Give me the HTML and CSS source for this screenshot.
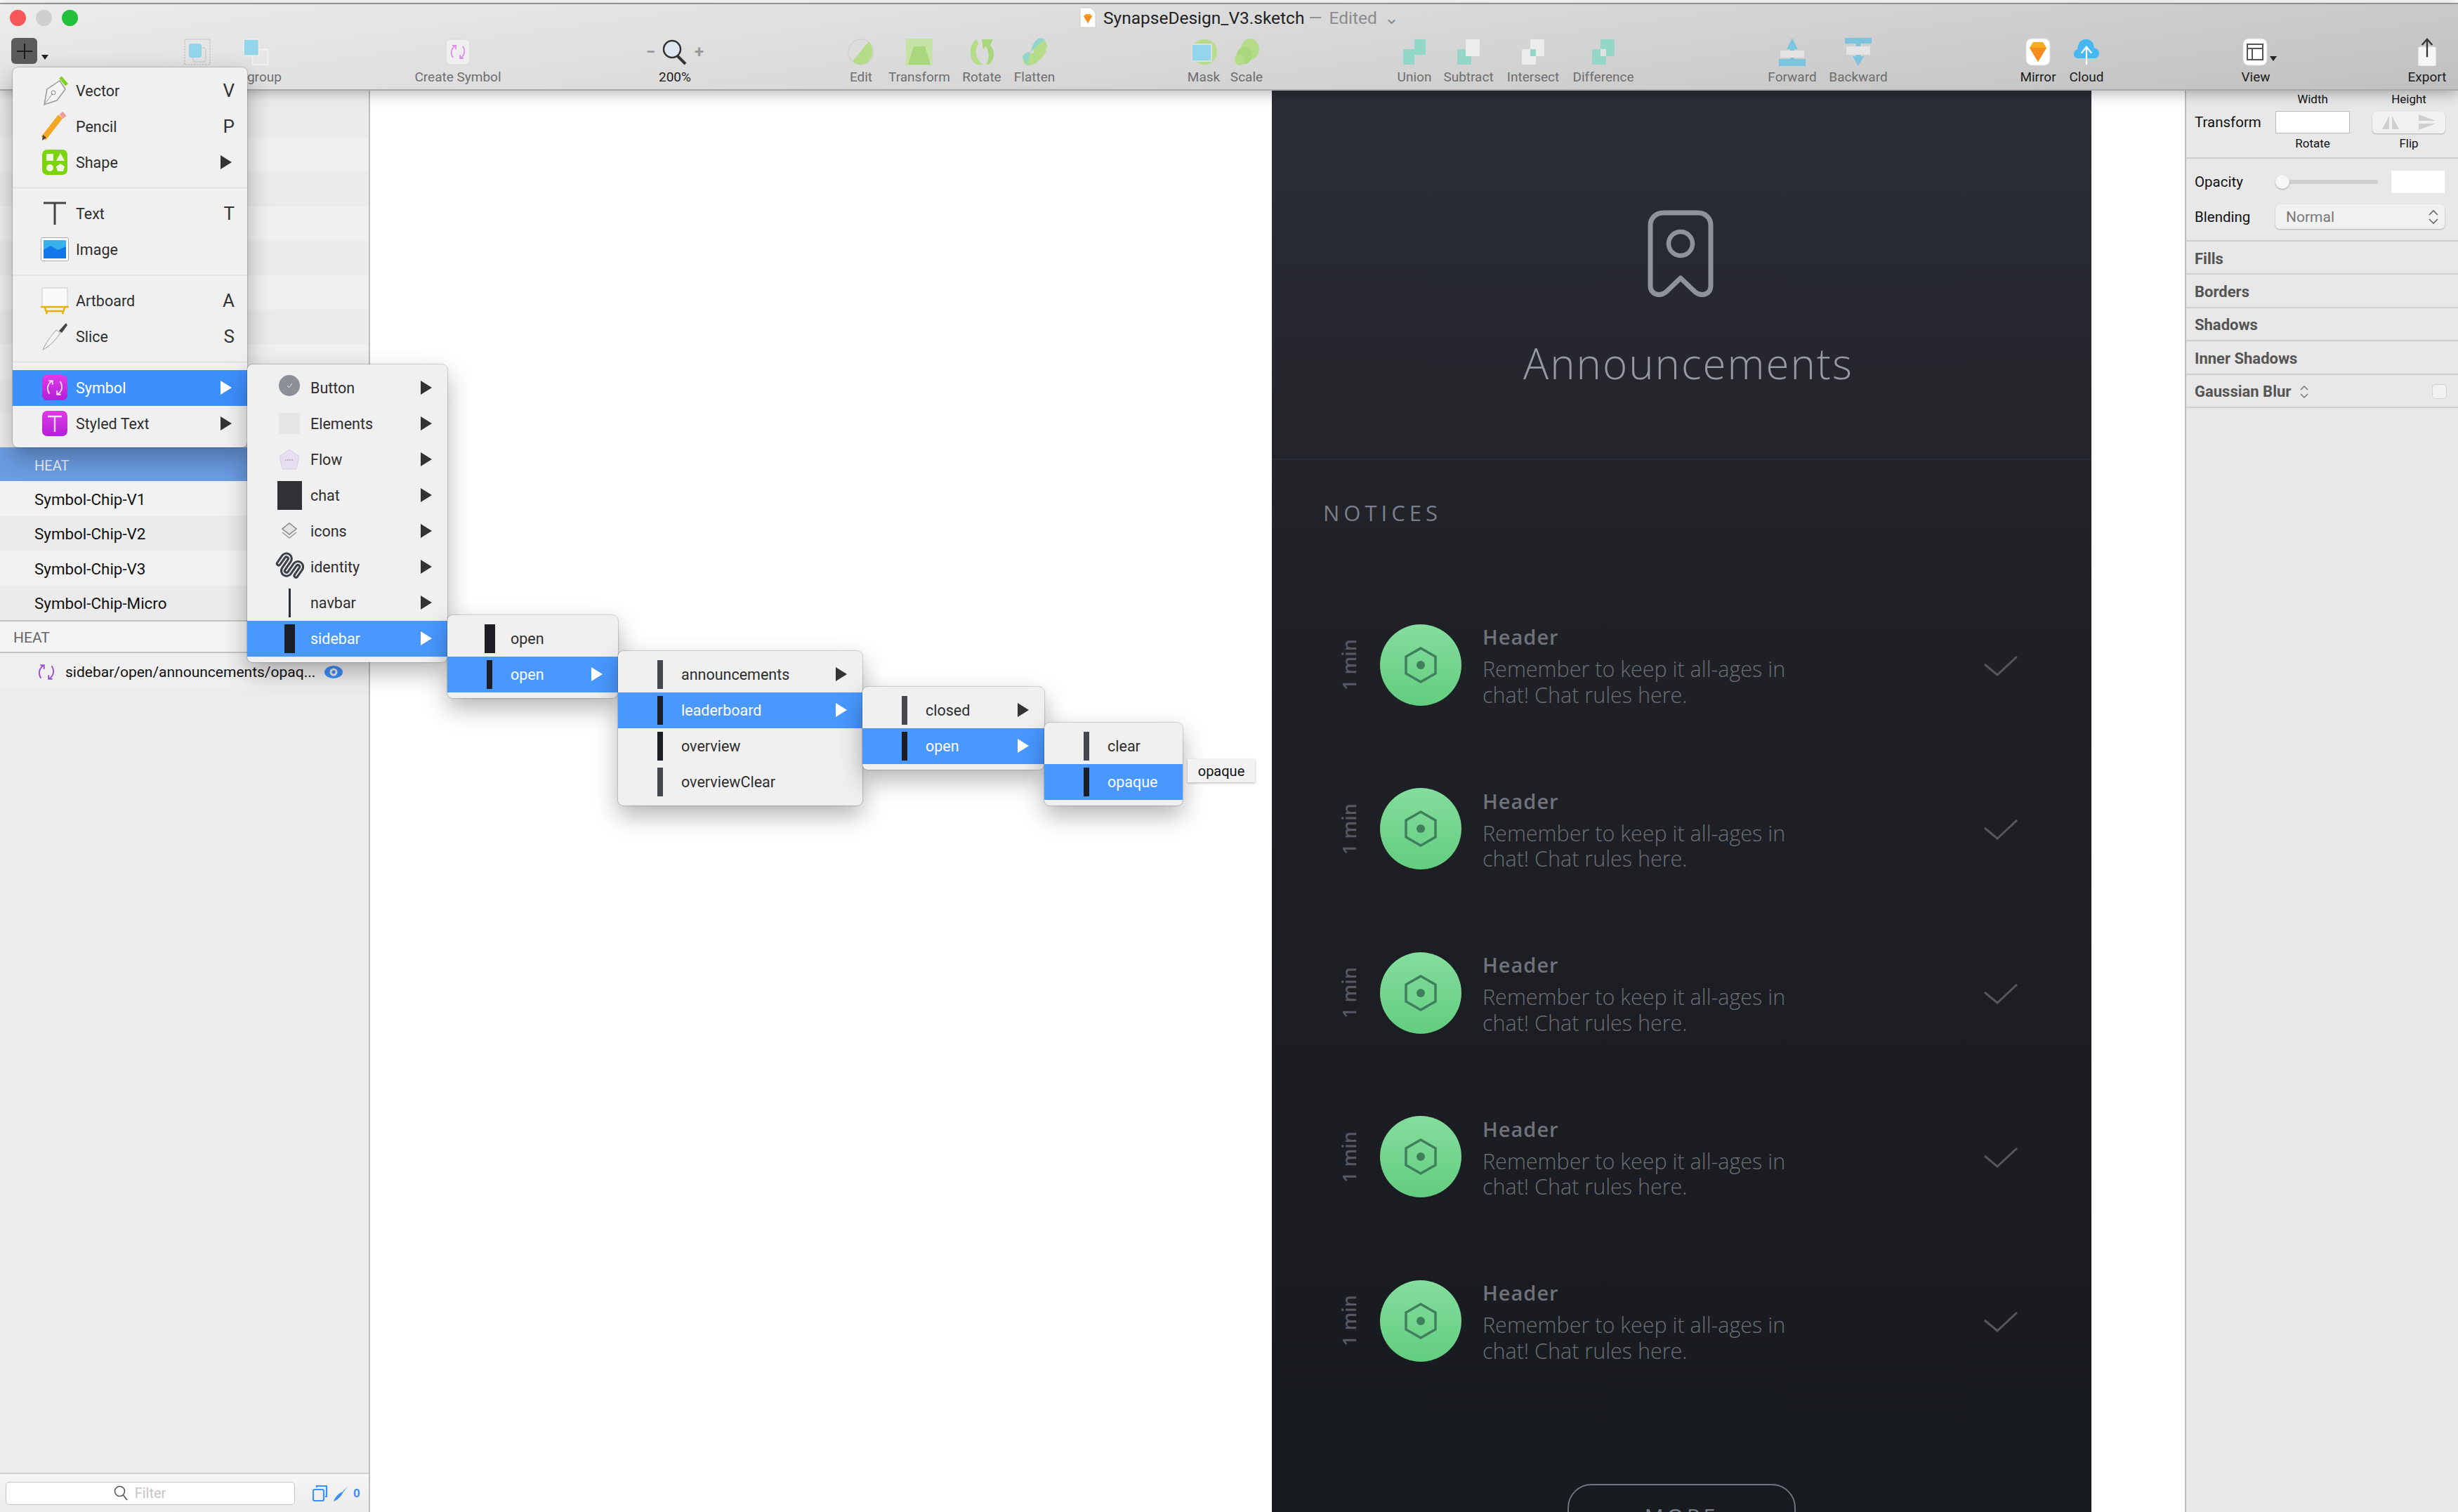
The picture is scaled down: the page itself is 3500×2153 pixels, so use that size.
FILE: index.html
```html
<!DOCTYPE html>
<html lang="en">
<head>
    <meta charset="UTF-8">
    <title>SynapseDesign_V3.sketch</title>
    <link rel="stylesheet" href="styles.css">
</head>
<body>
<svg class="defs" width="0" height="0">
    <symbol id="hex" viewBox="0 0 46 52">
        <path d="M23 2 L44 14 V38 L23 50 L2 38 V14 Z" fill="none" stroke="#3f7f5c" stroke-width="3.5"/>
        <circle cx="23" cy="26" r="6" fill="#3f7f5c"/>
    </symbol>
    <symbol id="tick" viewBox="0 0 48 29">
        <path d="M1 12 L19 27 L47 1" fill="none" stroke="#54575d" stroke-width="3"/>
    </symbol>
    <symbol id="sym-arrows" viewBox="0 0 24 24">
        <path d="M5 20 C1 14 2 7 9 3 M4 3 H9 V8 M19 4 C23 10 22 17 15 21 M20 21 H15 V16" fill="none" stroke="currentColor" stroke-width="1.8"/>
    </symbol>
</svg>

<div class="app">
    <div class="topline"></div>

    <header class="toolbar">
        <div class="titlebar">
            <span class="light light-red"></span>
            <span class="light light-grey"></span>
            <span class="light light-green"></span>
            <svg class="doc-icon" width="24" height="30" viewBox="0 0 24 30">
                <path d="M1 1 H16 L23 8 V29 H1 Z" fill="#fff" stroke="#ccc"/>
                <path d="M6 13 L9 10 H15 L18 13 L12 23 Z" fill="#f6a623"/>
                <path d="M6 13 H18 L12 23 Z" fill="#f78c1e"/>
            </svg>
            <span class="doc-name">SynapseDesign_V3.sketch</span>
            <span class="doc-state">— Edited ⌄</span>
        </div>
        <div class="tools">
            <div class="tool t-insert">
                <div class="insert-btn"><span class="insert-plus"></span></div>
                <span class="caret"></span>
            </div>
            <div class="group g-1">
                <div class="tool t-80">
                    <svg width="40" height="40" viewBox="0 0 40 40"><rect x="2" y="2" width="36" height="36" fill="none" stroke="#bdbdbd" stroke-dasharray="3 1"/><rect x="14" y="14" width="18" height="20" rx="3" fill="#e4e4e4" stroke="#c4c4c4"/><rect x="8" y="8" width="18" height="20" rx="3" fill="#93d5ea"/></svg>
                </div>
                <div class="tool t-88">
                    <svg width="44" height="44" viewBox="0 0 44 44"><rect x="16" y="18" width="24" height="24" fill="#e6e6e6" stroke="#f2f2f2" stroke-width="2"/><rect x="2" y="2" width="24" height="26" rx="2" fill="#93d5ea" stroke="#eee" stroke-width="2"/></svg>
                    <span class="tool-label">Ungroup</span>
                </div>
            </div>
            <div class="group g-2">
                <div class="tool t-140">
                    <svg width="36" height="38" viewBox="0 0 36 38"><rect x="1" y="1" width="34" height="36" rx="6" fill="#f0eef0" stroke="#d6d6d6"/><use href="#sym-arrows" x="6" y="7" width="24" height="24" color="#dc8ee6"/></svg>
                    <span class="tool-label">Create Symbol</span>
                </div>
            </div>
            <div class="group g-3">
                <div class="tool t-100">
                    <div class="zoom-ctl">
                        <span class="zoom-sign">−</span>
                        <svg width="38" height="38" viewBox="0 0 38 38"><circle cx="15" cy="15" r="12" fill="#dfe8f2" stroke="#333" stroke-width="2.5"/><path d="M23 25 L34 36" stroke="#333" stroke-width="4"/></svg>
                        <span class="zoom-sign">+</span>
                    </div>
                    <span class="tool-label on">200%</span>
                </div>
            </div>
            <div class="group g-4">
                <div class="tool t-74">
                    <svg width="40" height="40" viewBox="0 0 40 40"><circle cx="20" cy="20" r="18" fill="#ddd" stroke="#ccc"/><path d="M8 33 L31 5 C42 18 36 38 18 38 C14 38 10 36 8 33 Z" fill="#b5dc88"/></svg>
                    <span class="tool-label">Edit</span>
                </div>
                <div class="tool t-92">
                    <svg width="40" height="40" viewBox="0 0 40 40"><rect x="1" y="1" width="38" height="38" fill="#c6e3a5"/><path d="M12 12 H28 L36 38 H4 Z" fill="#aad67d"/></svg>
                    <span class="tool-label">Transform</span>
                </div>
                <div class="tool t-86">
                    <svg width="44" height="40" viewBox="0 0 44 40"><path d="M14 2 C2 12 4 30 14 38 H24 C14 32 10 16 18 8 Z" fill="#b5dc88"/><path d="M22 2 L38 2 L34 10 C42 20 40 32 32 38 H28 C34 28 32 18 28 12 L24 16 Z" fill="#aad67d"/></svg>
                    <span class="tool-label">Rotate</span>
                </div>
                <div class="tool t-64">
                    <svg width="40" height="40" viewBox="0 0 40 40"><path d="M20 22 C4 18 -2 36 10 39 C20 40 36 28 38 12 C38 2 28 -2 22 4 C16 10 18 16 20 22 Z" fill="#b5dc88"/><path d="M14 20 L35 2 C30 -1 25 0 22 4 C18 8 16 14 14 20 Z M10 39 L3 28 C4 22 10 20 14 20 Z" fill="#93d5cc"/></svg>
                    <span class="tool-label">Flatten</span>
                </div>
            </div>
            <div class="group g-5">
                <div class="tool t-60">
                    <svg width="40" height="40" viewBox="0 0 40 40"><circle cx="21" cy="20" r="18" fill="#b5dc88"/><rect x="3" y="9" width="28" height="24" fill="#93d5ea" stroke="#ddd" stroke-width="2"/></svg>
                    <span class="tool-label">Mask</span>
                </div>
                <div class="tool t-62">
                    <svg width="40" height="40" viewBox="0 0 40 40"><ellipse cx="25" cy="16" rx="13" ry="15" fill="#b5dc88"/><ellipse cx="17" cy="25" rx="11" ry="12" fill="#aad67d"/><ellipse cx="10" cy="31" rx="7" ry="8" fill="#b5dc88"/></svg>
                    <span class="tool-label">Scale</span>
                </div>
            </div>
            <div class="group g-6">
                <div class="tool t-70">
                    <svg width="40" height="40" viewBox="0 0 40 40"><path d="M20 2 H36 V24 H20 V38 H4 V16 H20 Z" fill="#93d8c6"/></svg>
                    <span class="tool-label">Union</span>
                </div>
                <div class="tool t-84">
                    <svg width="40" height="40" viewBox="0 0 40 40"><rect x="16" y="2" width="20" height="24" rx="2" fill="#ececec"/><path d="M4 16 H16 V26 H24 V38 H4 Z" fill="#93d8c6"/></svg>
                    <span class="tool-label">Subtract</span>
                </div>
                <div class="tool t-100">
                    <svg width="40" height="40" viewBox="0 0 40 40"><rect x="16" y="2" width="20" height="24" rx="2" fill="#ececec"/><rect x="4" y="16" width="20" height="22" rx="2" fill="#ececec"/><rect x="16" y="16" width="8" height="10" fill="#93d8c6"/></svg>
                    <span class="tool-label">Intersect</span>
                </div>
                <div class="tool t-100">
                    <svg width="40" height="40" viewBox="0 0 40 40"><rect x="16" y="2" width="20" height="24" rx="2" fill="#93d8c6"/><rect x="4" y="16" width="20" height="22" rx="2" fill="#93d8c6"/><rect x="16" y="16" width="8" height="10" fill="#e2e2e2"/></svg>
                    <span class="tool-label">Difference</span>
                </div>
            </div>
            <div class="group g-7">
                <div class="tool t-100">
                    <svg width="38" height="40" viewBox="0 0 38 40"><path d="M19 0 L27 16 H22 V30 H38 V40 H0 V30 H16 V16 H11 Z" fill="#7cc4de"/><rect x="2" y="18" width="34" height="10" fill="#e4e4e4"/></svg>
                    <span class="tool-label">Forward</span>
                </div>
                <div class="tool t-88">
                    <svg width="38" height="40" viewBox="0 0 38 40"><path d="M0 0 H38 V8 H22 V26 H27 L19 40 L11 26 H16 V8 H0 Z" fill="#7cc4de"/><rect x="2" y="12" width="34" height="12" fill="#e4e4e4"/></svg>
                    <span class="tool-label">Backward</span>
                </div>
            </div>
            <div class="group g-8">
                <div class="tool t-70">
                    <svg width="36" height="40" viewBox="0 0 36 40"><rect x="1" y="1" width="34" height="38" rx="8" fill="#fff" stroke="#ddd"/><path d="M6 14 L11 6 H25 L30 14 L18 34 Z" fill="#f8ae1c"/><path d="M6 14 H30 L18 34 Z" fill="#f68b1f"/></svg>
                    <span class="tool-label on">Mirror</span>
                </div>
                <div class="tool t-68">
                    <svg width="44" height="44" viewBox="0 0 44 44"><path d="M9 32 C0 32 0 20 8 18 C8 8 14 2 22 2 C30 2 34 10 34 16 C44 16 44 32 35 32 Z" fill="#45b8f2"/><path d="M22 42 V16 M14 24 L22 14 L30 24" fill="none" stroke="#fff" stroke-width="2.5"/></svg>
                    <span class="tool-label on">Cloud</span>
                </div>
            </div>
            <div class="group g-9">
                <div class="tool t-80">
                    <div class="view-icon">
                        <svg width="36" height="40" viewBox="0 0 36 40"><rect x="1" y="1" width="34" height="38" rx="8" fill="#fff" stroke="#ddd"/><rect x="7" y="9" width="22" height="22" fill="none" stroke="#555" stroke-width="2"/><path d="M7 15 H29 M14 15 V31" stroke="#555" stroke-width="2"/></svg>
                        <span class="caret caret-view"></span>
                    </div>
                    <span class="tool-label on">View</span>
                </div>
            </div>
            <div class="group g-10">
                <div class="tool t-88">
                    <svg width="32" height="44" viewBox="0 0 32 44"><rect x="2" y="14" width="28" height="30" rx="3" fill="#f6f6f6" stroke="#ddd"/><path d="M16 30 V3 M8 11 L16 2 L24 11" fill="none" stroke="#333" stroke-width="2.5"/></svg>
                    <span class="tool-label on">Export</span>
                </div>
            </div>
        </div>
    </header>

    <main class="workspace">
        <aside class="sidebar">
            <div class="page-rows"></div>
            <div class="side-band">HEAT</div>
            <div class="side-row">Symbol-Chip-V1</div>
            <div class="side-row even">Symbol-Chip-V2</div>
            <div class="side-row">Symbol-Chip-V3</div>
            <div class="side-row even">Symbol-Chip-Micro</div>
            <div class="side-head">HEAT</div>
            <div class="layer-row">
                <svg class="layer-sym" width="26" height="28"><use href="#sym-arrows" width="26" height="28" color="#9a4fd0"/></svg>
                <span class="layer-name">sidebar/open/announcements/opaq...</span>
                <svg class="layer-eye" width="28" height="20" viewBox="0 0 28 20"><ellipse cx="14" cy="10" rx="13" ry="9" fill="#3d8ffb"/><circle cx="14" cy="10" r="5.5" fill="#ececec"/><circle cx="14" cy="10" r="2.5" fill="#3d8ffb"/></svg>
            </div>
            <div class="side-fill"></div>
            <div class="side-foot">
                <div class="filter">
                    <svg width="20" height="22" viewBox="0 0 20 22"><circle cx="8.5" cy="8.5" r="7" fill="none" stroke="#555" stroke-width="1.6"/><path d="M13.5 14 L19 21" stroke="#555" stroke-width="1.6"/></svg>
                    <span>Filter</span>
                </div>
                <svg width="22" height="24" viewBox="0 0 22 24"><rect x="1" y="7" width="15" height="16" rx="2" fill="none" stroke="#3d8ffb" stroke-width="2.2"/><path d="M6 4 V2 H20 V17 H18" fill="none" stroke="#3d8ffb" stroke-width="2.2"/></svg>
                <svg class="foot-knife" width="22" height="24" viewBox="0 0 22 24"><path d="M21 1 L13 12 C10 18 5 22 0 24 C2 18 6 13 13 10 Z" fill="#3d8ffb"/></svg>
                <span class="foot-count">0</span>
            </div>
        </aside>

        <section class="canvas">
            <div class="artboard">
                <div class="hero">
                    <svg width="96" height="124" viewBox="0 0 96 124">
                        <path d="M48 97 L27 117 C18 124 5 120 5 108 V22 C5 12 12 4 24 4 H72 C84 4 91 12 91 22 V108 C91 120 78 124 69 117 Z" fill="none" stroke="#8e9299" stroke-width="7" stroke-linejoin="round"/>
                        <circle cx="48" cy="48" r="17" fill="none" stroke="#8e9299" stroke-width="6.5"/>
                    </svg>
                    <h1 class="hero-title">Announcements</h1>
                </div>
                <h2 class="notices-title">NOTICES</h2>
                <ul class="notices">
                    <li class="notice">
                        <span class="notice-time">1 min</span>
                        <span class="notice-badge"><svg width="46" height="52"><use href="#hex"/></svg></span>
                        <div class="notice-text">
                            <h3>Header</h3>
                            <p>Remember to keep it all-ages in<br>chat! Chat rules here.</p>
                        </div>
                        <svg class="notice-check" width="48" height="29"><use href="#tick"/></svg>
                    </li>
                    <li class="notice">
                        <span class="notice-time">1 min</span>
                        <span class="notice-badge"><svg width="46" height="52"><use href="#hex"/></svg></span>
                        <div class="notice-text">
                            <h3>Header</h3>
                            <p>Remember to keep it all-ages in<br>chat! Chat rules here.</p>
                        </div>
                        <svg class="notice-check" width="48" height="29"><use href="#tick"/></svg>
                    </li>
                    <li class="notice">
                        <span class="notice-time">1 min</span>
                        <span class="notice-badge"><svg width="46" height="52"><use href="#hex"/></svg></span>
                        <div class="notice-text">
                            <h3>Header</h3>
                            <p>Remember to keep it all-ages in<br>chat! Chat rules here.</p>
                        </div>
                        <svg class="notice-check" width="48" height="29"><use href="#tick"/></svg>
                    </li>
                    <li class="notice">
                        <span class="notice-time">1 min</span>
                        <span class="notice-badge"><svg width="46" height="52"><use href="#hex"/></svg></span>
                        <div class="notice-text">
                            <h3>Header</h3>
                            <p>Remember to keep it all-ages in<br>chat! Chat rules here.</p>
                        </div>
                        <svg class="notice-check" width="48" height="29"><use href="#tick"/></svg>
                    </li>
                    <li class="notice">
                        <span class="notice-time">1 min</span>
                        <span class="notice-badge"><svg width="46" height="52"><use href="#hex"/></svg></span>
                        <div class="notice-text">
                            <h3>Header</h3>
                            <p>Remember to keep it all-ages in<br>chat! Chat rules here.</p>
                        </div>
                        <svg class="notice-check" width="48" height="29"><use href="#tick"/></svg>
                    </li>
                </ul>
                <div class="more-btn">MORE</div>
            </div>
        </section>

        <aside class="inspector">
            <div class="ins-transform">
                <span></span><span class="ins-cap">Width</span><span class="ins-cap ins-cap-right">Height</span>
                <span class="ins-label">Transform</span>
                <span class="ins-input"></span>
                <div class="flip">
                    <svg width="52" height="30" viewBox="0 0 52 30"><path d="M24 6 V25 H14 Z M28 6 V25 H38 Z" fill="#cfcfcf"/></svg>
                    <svg width="52" height="30" viewBox="0 0 52 30"><path d="M14 4 L38 13 H14 Z M14 26 L38 17 H14 Z" fill="#cfcfcf"/></svg>
                </div>
                <span></span><span class="ins-cap">Rotate</span><span class="ins-cap ins-cap-right">Flip</span>
            </div>
            <div class="ins-style">
                <div class="ins-line">
                    <span class="ins-label">Opacity</span>
                    <div class="slider"><span class="slider-knob"></span></div>
                    <span class="ins-input ins-input-small"></span>
                </div>
                <div class="ins-line">
                    <span class="ins-label">Blending</span>
                    <div class="select">
                        <span>Normal</span>
                        <svg width="16" height="24" viewBox="0 0 16 24"><path d="M2 9 L8 3 L14 9 M2 15 L8 21 L14 15" fill="none" stroke="#666" stroke-width="1.6"/></svg>
                    </div>
                </div>
            </div>
            <div class="ins-row">Fills</div>
            <div class="ins-row">Borders</div>
            <div class="ins-row">Shadows</div>
            <div class="ins-row">Inner Shadows</div>
            <div class="ins-row">
                Gaussian Blur
                <svg class="blur-step" width="14" height="20" viewBox="0 0 14 20"><path d="M2 7 L7 2 L12 7 M2 13 L7 18 L12 13" fill="none" stroke="#777" stroke-width="1.5"/></svg>
                <span class="check-box"></span>
            </div>
        </aside>
    </main>

    <!-- insert menu -->
    <nav class="menu menu-main">
        <div class="menu-row"><span class="menu-icon">
            <svg width="38" height="44" viewBox="0 0 38 44"><path d="M4 42 L8 20 L26 8 L34 20 L22 36 Z" fill="#f4f4f4" stroke="#999" stroke-width="1.5"/><path d="M4 42 L16 26" stroke="#999"/><circle cx="17" cy="25" r="3" fill="none" stroke="#888"/><path d="M27 3 L36 14" stroke="#7ed321" stroke-width="5"/></svg>
            </span><span class="menu-text">Vector</span><span class="menu-key">V</span></div>
        <div class="menu-row"><span class="menu-icon">
            <svg width="38" height="42" viewBox="0 0 38 42"><path d="M3 38 L27 7" stroke="#f5a623" stroke-width="8"/><path d="M28 7 L33 3" stroke="#f19a9a" stroke-width="8"/><path d="M1 41 L2 33 L7 37 Z" fill="#444"/></svg>
            </span><span class="menu-text">Pencil</span><span class="menu-key">P</span></div>
        <div class="menu-row"><span class="menu-icon">
            <svg width="36" height="36" viewBox="0 0 36 36"><rect width="36" height="36" rx="7" fill="#7ed30f"/><rect x="6" y="6" width="10" height="10" fill="#eef8df"/><path d="M26 5 L32 16 H20 Z" fill="#eef8df"/><circle cx="11" cy="26" r="5" fill="#eef8df"/><path d="M26 20 L32 24 L30 31 H22 L20 24 Z" fill="#eef8df"/></svg>
            </span><span class="menu-text">Shape</span><span class="menu-arrow"></span></div>
        <div class="menu-sep"></div>
        <div class="menu-row"><span class="menu-icon">
            <svg width="34" height="34" viewBox="0 0 34 34"><path d="M1 2 H33 M17 2 V33" stroke="#444" stroke-width="3"/></svg>
            </span><span class="menu-text">Text</span><span class="menu-key">T</span></div>
        <div class="menu-row"><span class="menu-icon">
            <svg width="40" height="34" viewBox="0 0 40 34"><rect x=".5" y=".5" width="39" height="33" rx="2" fill="#fff" stroke="#aaa"/><rect x="4" y="4" width="32" height="26" fill="#39b0ee"/><path d="M4 18 L14 12 L24 18 L36 13 V30 H4 Z" fill="#1176e8"/></svg>
            </span><span class="menu-text">Image</span></div>
        <div class="menu-sep"></div>
        <div class="menu-row"><span class="menu-icon">
            <svg width="40" height="40" viewBox="0 0 40 40"><rect x="2" y="2" width="36" height="27" fill="#fafafa" stroke="#ccc"/><path d="M0 29 H40 M6 30 L9 39 M34 30 L31 39 M9 35 H31" stroke="#e8b00f" stroke-width="2.5"/></svg>
            </span><span class="menu-text">Artboard</span><span class="menu-key">A</span></div>
        <div class="menu-row"><span class="menu-icon">
            <svg width="36" height="40" viewBox="0 0 36 40"><path d="M1 39 C10 34 19 26 26 15 L20 11 C12 20 5 30 1 39 Z" fill="#f5f5f5" stroke="#999"/><path d="M24 12 L34 1 L36 4 L28 15 Z" fill="#444"/></svg>
            </span><span class="menu-text">Slice</span><span class="menu-key">S</span></div>
        <div class="menu-sep"></div>
        <div class="menu-row active main-active"><span class="menu-icon">
            <span class="app-tile"><svg width="26" height="28"><use href="#sym-arrows" width="26" height="28" color="#f6dcfa"/></svg></span>
            </span><span class="menu-text">Symbol</span><span class="menu-arrow"></span></div>
        <div class="menu-row"><span class="menu-icon">
            <span class="app-tile"><svg width="24" height="26" viewBox="0 0 24 26"><path d="M2 3 H22 M12 3 V25" stroke="#f6dcfa" stroke-width="2.4"/></svg></span>
            </span><span class="menu-text">Styled Text</span><span class="menu-arrow"></span></div>
    </nav>

    <nav class="menu menu-symbols">
        <div class="menu-row"><span class="menu-icon">
            <svg width="32" height="36" viewBox="0 0 32 36"><circle cx="16" cy="15" r="15" fill="#8b8f96"/><path d="M13 15 L15.5 18 L20 12" fill="none" stroke="#e8e8e8"/></svg>
            </span><span class="menu-text">Button</span><span class="menu-arrow"></span></div>
        <div class="menu-row"><span class="menu-icon"><span class="thumb-elements"></span></span><span class="menu-text">Elements</span><span class="menu-arrow"></span></div>
        <div class="menu-row"><span class="menu-icon">
            <svg width="30" height="30" viewBox="0 0 30 30"><path d="M15 1 L29 11 L25 29 H5 L1 11 Z" fill="#e5dff0" stroke="#d5cfe0"/><path d="M9 16 H21" stroke="#8a7fa0" stroke-dasharray="2 1"/></svg>
            </span><span class="menu-text">Flow</span><span class="menu-arrow"></span></div>
        <div class="menu-row"><span class="menu-icon"><span class="thumb-chat"></span></span><span class="menu-text">chat</span><span class="menu-arrow"></span></div>
        <div class="menu-row"><span class="menu-icon">
            <svg width="22" height="24" viewBox="0 0 22 24"><path d="M11 1 L21 9 L11 17 L1 9 Z" fill="#e4e4e4" stroke="#888" stroke-width="1.5"/><path d="M1 14 L11 22 L21 14" fill="none" stroke="#999" stroke-width="1.5"/></svg>
            </span><span class="menu-text">icons</span><span class="menu-arrow"></span></div>
        <div class="menu-row"><span class="menu-icon">
            <svg width="42" height="42" viewBox="0 0 42 42"><g transform="rotate(35 21 21)" fill="none" stroke-linecap="round"><path id="chain" d="M6 26 V14 a5 5 0 0 1 10 0 V28 a5 5 0 0 0 10 0 V14 a5 5 0 0 1 10 0 V26" stroke="#3b4048" stroke-width="8"/><path d="M6 26 V14 a5 5 0 0 1 10 0 V28 a5 5 0 0 0 10 0 V14 a5 5 0 0 1 10 0 V26" stroke="#e4e4e4" stroke-width="2"/></g></svg>
            </span><span class="menu-text">identity</span><span class="menu-arrow"></span></div>
        <div class="menu-row"><span class="menu-icon"><span class="bar bar-thin"></span></span><span class="menu-text">navbar</span><span class="menu-arrow"></span></div>
        <div class="menu-row active"><span class="menu-icon"><span class="bar bar-wide"></span></span><span class="menu-text">sidebar</span><span class="menu-arrow"></span></div>
    </nav>

    <nav class="menu menu-sidebar">
        <div class="menu-row"><span class="menu-icon"><span class="bar bar-wide"></span></span><span class="menu-text">open</span></div>
        <div class="menu-row active"><span class="menu-icon"><span class="bar bar-slim"></span></span><span class="menu-text">open</span><span class="menu-arrow"></span></div>
    </nav>

    <nav class="menu menu-open">
        <div class="menu-row"><span class="menu-icon"><span class="bar bar-slim bar-grey"></span></span><span class="menu-text">announcements</span><span class="menu-arrow"></span></div>
        <div class="menu-row active"><span class="menu-icon"><span class="bar bar-slim"></span></span><span class="menu-text">leaderboard</span><span class="menu-arrow"></span></div>
        <div class="menu-row"><span class="menu-icon"><span class="bar bar-slim"></span></span><span class="menu-text">overview</span></div>
        <div class="menu-row"><span class="menu-icon"><span class="bar bar-slim bar-grey"></span></span><span class="menu-text">overviewClear</span></div>
    </nav>

    <nav class="menu menu-board">
        <div class="menu-row"><span class="menu-icon"><span class="bar bar-slim bar-grey"></span></span><span class="menu-text">closed</span><span class="menu-arrow"></span></div>
        <div class="menu-row active"><span class="menu-icon"><span class="bar bar-slim"></span></span><span class="menu-text">open</span><span class="menu-arrow"></span></div>
    </nav>

    <nav class="menu menu-leaf">
        <div class="menu-row"><span class="menu-icon"><span class="bar bar-slim bar-grey"></span></span><span class="menu-text">clear</span></div>
        <div class="menu-row active"><span class="menu-icon"><span class="bar bar-slim"></span></span><span class="menu-text">opaque</span></div>
    </nav>

    <div class="menu-tip">opaque</div>
</div>
</body>
</html>
```

FILE: styles.css
```css
* {
    box-sizing: border-box;
}
html, body {
    margin: 0;
    height: 2153px;
    overflow: hidden;
    background: #fff;
}
body {
    font-family: Roboto, "Liberation Sans", sans-serif;
    font-size: 20px;
    color: #222;
}
.defs {
    display: block;
    height: 0;
}
.app {
    position: relative;
    width: 3500px;
    height: 2153px;
    overflow: hidden;
    display: flex;
    flex-direction: column;
}
.topline {
    height: 6px;
    border-bottom: 2px solid #a3a3a3;
    flex: none;
}

/* toolbar */
.toolbar {
    position: relative;
    z-index: 2;
    height: 123px;
    flex: none;
    background: linear-gradient(172deg, #ececec 0%, #d6d6d6 55%, #c0c0c0 100%);
    border-bottom: 2px solid #aaa;
    box-shadow: 0 3px 20px rgba(0,0,0,.32);
}
.titlebar {
    display: flex;
    align-items: center;
    height: 48px;
    padding: 0 0 10px 14px;
    gap: 14px;
}
.light {
    width: 23px;
    height: 23px;
    border-radius: 50%;
}
.light-red { background: #f9565a; }
.light-grey { background: #cfcfcf; }
.light-green { background: #21c13a; }
.doc-icon {
    margin-left: 1412px;
    margin-right: -4px;
}
.doc-name {
    font-size: 24.5px;
    color: #222;
}
.doc-state {
    font-size: 24.5px;
    word-spacing: 4px;
    color: #8c8c8c;
    margin-left: -8px;
}
.tools {
    display: flex;
    height: 66px;
}
.group {
    display: flex;
}
.g-1 { margin-left: 155px; }
.g-2 { margin-left: 173px; }
.g-3 { margin-left: 189px; }
.g-4 { margin-left: 178px; }
.g-5 { margin-left: 179px; }
.g-6 { margin-left: 173px; }
.g-7 { margin-left: 169px; }
.g-8 { margin-left: 177px; }
.g-9 { margin-left: 167px; }
.g-10 { margin-left: 160px; }
.tool {
    position: relative;
    display: flex;
    flex-direction: column;
    align-items: center;
    height: 66px;
}
.tool > svg, .zoom-ctl, .view-icon {
    height: 40px;
    flex: none;
}
.tool-label {
    margin-top: 6px;
    font-size: 19px;
    line-height: 20px;
    color: #6e6e6e;
    white-space: nowrap;
}
.tool-label.on {
    color: #1c1c1c;
}
.t-60 { width: 60px; }
.t-62 { width: 62px; }
.t-64 { width: 64px; }
.t-68 { width: 68px; }
.t-70 { width: 70px; }
.t-74 { width: 74px; }
.t-80 { width: 80px; }
.t-84 { width: 84px; }
.t-86 { width: 86px; }
.t-88 { width: 88px; }
.t-92 { width: 92px; }
.t-100 { width: 100px; }
.t-140 { width: 140px; }
.t-insert {
    width: 70px;
    margin-left: 16px;
    flex-direction: row;
    align-items: flex-start;
}
.insert-btn {
    width: 37px;
    height: 37px;
    border-radius: 6px;
    background: #5c5c5c;
    display: flex;
    align-items: center;
    justify-content: center;
}
.insert-plus {
    position: relative;
    width: 22px;
    height: 2px;
    background: #1d1d1d;
}
.insert-plus::after {
    content: "";
    position: absolute;
    left: 10px;
    top: -10px;
    width: 2px;
    height: 22px;
    background: #1d1d1d;
}
.caret {
    width: 0;
    height: 0;
    margin: 24px 0 0 6px;
    border-left: 5px solid transparent;
    border-right: 5px solid transparent;
    border-top: 7px solid #222;
}
.zoom-ctl {
    display: flex;
    align-items: center;
    gap: 9px;
}
.zoom-sign {
    font-size: 24px;
    font-weight: 700;
    color: #9a9a9a;
}
.view-icon {
    display: flex;
    align-items: flex-start;
}
.caret-view {
    margin: 26px -10px 0 3px;
}

/* workspace */
.workspace {
    flex: 1;
    display: flex;
    min-height: 0;
}
.sidebar {
    width: 527px;
    flex: none;
    display: flex;
    flex-direction: column;
    background: #ececec;
    border-right: 2px solid #bfbfbf;
}
.page-rows {
    height: 508px;
    flex: none;
    background: repeating-linear-gradient(#f0f0f0 0 49px, #ebebeb 49px 98px);
    background-position: 0 -31px;
}
.side-band {
    height: 48px;
    flex: none;
    display: flex;
    align-items: center;
    padding: 3px 0 0 49px;
    background: #6b9de3;
    color: #eaf2fd;
    font-size: 20px;
}
.side-row {
    height: 49.5px;
    flex: none;
    display: flex;
    align-items: center;
    padding: 2px 0 0 49px;
    background: #f2f2f2;
    color: #111;
    font-size: 22.4px;
}
.side-row.even {
    background: #ebebeb;
}
.side-head {
    height: 47px;
    flex: none;
    display: flex;
    align-items: center;
    padding: 2px 0 0 19px;
    background: #f4f4f4;
    color: #666;
    font-size: 21px;
    border-top: 2px solid #c4c4c4;
    border-bottom: 2px solid #c4c4c4;
}
.layer-row {
    height: 52px;
    flex: none;
    display: flex;
    align-items: center;
    padding: 2px 0 0 53px;
    background: #efefef;
    color: #111;
    font-size: 21px;
}
.layer-name {
    margin-left: 14px;
    white-space: nowrap;
}
.layer-eye {
    margin-left: 12px;
}
.side-fill {
    flex: 1;
}
.side-foot {
    height: 56px;
    flex: none;
    display: flex;
    align-items: center;
    padding: 0 0 0 8px;
    background: linear-gradient(#f6f6f6, #ebebeb);
    border-top: 2px solid #d0d0d0;
}
.filter {
    width: 412px;
    height: 33px;
    margin-right: 25px;
    padding-right: 30px;
    display: flex;
    align-items: center;
    justify-content: center;
    gap: 10px;
    background: #fff;
    border: 1px solid #c4c4c4;
    border-radius: 5px;
    color: #c4c4c4;
}
.foot-knife {
    margin-left: 8px;
}
.foot-count {
    margin-left: 6px;
    font-size: 17px;
    font-weight: 700;
    color: #3d8ffb;
}

/* artboard */
.canvas {
    flex: 1;
    min-width: 0;
    background: #fff;
    padding-left: 1284px;
}
.artboard {
    width: 1167px;
    height: 2024px;
    overflow: hidden;
    background: linear-gradient(#2b2e35 0%, #1f2126 35%, #171a1e 100%);
}
.hero {
    height: 526px;
    padding-top: 170px;
    text-align: center;
    border-bottom: 2px solid #2a2e36;
}
.hero svg {
    display: block;
    margin: 0 0 0 534px;
}
.hero-title {
    margin: 54px 0 0;
    padding-left: 19px;
    font-family: "Open Sans", sans-serif;
    font-size: 60px;
    font-weight: 300;
    line-height: 80px;
    letter-spacing: 2px;
    color: #959aa1;
}
.notices-title {
    margin: 55px 0 0 73px;
    font-family: "Open Sans", sans-serif;
    font-size: 31px;
    font-weight: 400;
    line-height: 40px;
    letter-spacing: 6px;
    color: #7a7e88;
}
.notices {
    list-style: none;
    margin: 80px 0 0;
    padding: 0;
}
.notice {
    height: 233.5px;
    display: flex;
    align-items: center;
    padding-left: 90px;
}
.notice-time {
    width: 40px;
    flex: none;
    writing-mode: vertical-rl;
    transform: rotate(180deg);
    text-align: center;
    font-family: "Open Sans", sans-serif;
    font-size: 27px;
    font-weight: 600;
    line-height: 40px;
    color: #565963;
}
.notice-badge {
    width: 116px;
    height: 116px;
    flex: none;
    margin-left: 24px;
    border-radius: 50%;
    display: flex;
    align-items: center;
    justify-content: center;
    background: linear-gradient(#85dd9e, #62cd7f);
}
.notice-text {
    margin-left: 30px;
    padding-top: 3px;
    font-family: "Open Sans", sans-serif;
}
.notice-text h3 {
    margin: 0 0 9px;
    font-size: 29px;
    font-weight: 600;
    line-height: 36px;
    letter-spacing: 1px;
    color: #6f727b;
}
.notice-text p {
    margin: 0;
    font-size: 30.5px;
    font-weight: 300;
    line-height: 36.5px;
    color: #6c6f77;
}
.notice-check {
    margin-left: auto;
    margin-right: 105px;
    margin-top: 3px;
    flex: none;
}
.more-btn {
    width: 325px;
    height: 100px;
    margin: 0 auto;
    position: relative;
    top: 115px;
    padding-top: 23px;
    text-align: center;
    font-family: "Open Sans", sans-serif;
    font-size: 30px;
    letter-spacing: 5px;
    color: #7a7e88;
    border: 2px solid #70737d;
    border-radius: 34px;
}

/* inspector */
.inspector {
    width: 389px;
    flex: none;
    background: #e8e8e8;
    border-left: 2px solid #bdbdbd;
    font-size: 20.5px;
    color: #111;
}
.ins-transform {
    height: 97px;
    padding: 1px 0 0 12px;
    display: grid;
    grid-template-columns: 115px 106px 136px;
    grid-template-rows: 22px 32px 16px;
    row-gap: 6px;
    align-items: center;
    border-bottom: 2px solid #cfcfcf;
}
.ins-cap {
    font-size: 17px;
    line-height: 16px;
    text-align: center;
}
.ins-cap-right {
    margin-left: 32px;
}
.ins-label {
    white-space: nowrap;
}
.ins-input {
    height: 32px;
    background: #fff;
    border: 1px solid #bbb;
}
.flip {
    display: flex;
    margin-left: 32px;
    height: 31px;
    background: #f1f1f1;
    border-radius: 6px;
    box-shadow: 0 1px 2px rgba(0,0,0,.25);
}
.ins-style {
    height: 118px;
    padding: 16px 18px 0 12px;
    border-bottom: 2px solid #cfcfcf;
    display: flex;
    flex-direction: column;
    gap: 17px;
}
.ins-line {
    display: flex;
    align-items: center;
    height: 33px;
}
.ins-line .ins-label {
    width: 115px;
    flex: none;
}
.slider {
    position: relative;
    width: 146px;
    height: 6px;
    border-radius: 3px;
    background: #cfcfcf;
}
.slider-knob {
    position: absolute;
    left: 0;
    top: -7px;
    width: 20px;
    height: 20px;
    border-radius: 50%;
    background: #f7f7f7;
    box-shadow: 0 1px 2px rgba(0,0,0,.3);
}
.ins-input-small {
    width: 76px;
    margin-left: 19px;
    border: 0;
}
.select {
    width: 241px;
    height: 35px;
    display: flex;
    align-items: center;
    justify-content: space-between;
    padding: 0 8px 0 15px;
    background: #f1f1f1;
    border-radius: 6px;
    box-shadow: 0 1px 2px rgba(0,0,0,.25);
    color: #777;
    font-size: 21px;
}
.ins-row {
    height: 47.4px;
    display: flex;
    align-items: center;
    padding: 3px 16px 0 12px;
    font-weight: 700;
    font-size: 22px;
    color: #555;
    border-bottom: 2px solid #cfcfcf;
}
.blur-step {
    margin-left: 12px;
}
.check-box {
    width: 21px;
    height: 21px;
    margin-left: auto;
    background: #f1f1f1;
    border: 1px solid #d2d2d2;
    border-radius: 4px;
}

/* popup menus */
.menu {
    position: absolute;
    z-index: 3;
    padding: 7.5px 0 8px;
    background: #f0f0f0;
    border-radius: 8px;
    box-shadow: 0 0 1px 1px rgba(0,0,0,.16), 0 14px 34px rgba(0,0,0,.3);
    font-size: 21.5px;
    color: #2e2e2e;
}
.menu-main { left: 18px; top: 96px; width: 334px; }
.menu-symbols { left: 352px; top: 519px; width: 285px; }
.menu-sidebar { left: 637px; top: 876px; width: 243px; }
.menu-open { left: 880px; top: 927px; width: 348px; }
.menu-board { left: 1228px; top: 978px; width: 259px; }
.menu-leaf { left: 1487px; top: 1029px; width: 197px; }
.menu-row {
    display: flex;
    align-items: center;
    height: 51px;
    padding-right: 22px;
    white-space: nowrap;
}
.menu-row.active {
    background: #4898ff;
    color: #fff;
}
.menu-row.main-active {
    background: #3d8ffb;
}
.menu-icon {
    width: 60px;
    height: 51px;
    margin-left: 30px;
    flex: none;
    display: flex;
    align-items: center;
    justify-content: center;
}
.menu-text {
    flex: 1;
}
.menu-key {
    font-size: 26px;
    color: #333;
    margin-right: -4px;
}
.menu-arrow {
    width: 0;
    height: 0;
    border-top: 10px solid transparent;
    border-bottom: 10px solid transparent;
    border-left: 16px solid #333;
}
.active .menu-arrow {
    border-left-color: #fff;
}
.menu-sep {
    height: 22px;
    margin: 0;
    background: linear-gradient(transparent 9.5px, #e5e5e5 9.5px 12.5px, transparent 12.5px);
}
.app-tile {
    width: 36px;
    height: 36px;
    border-radius: 7px;
    display: flex;
    align-items: center;
    justify-content: center;
    background: linear-gradient(#df3ae6, #b41fd8);
}
.thumb-elements {
    width: 30px;
    height: 30px;
    background: #e6e6e6;
}
.thumb-chat {
    width: 35px;
    height: 41px;
    background: #2f3135;
}
.bar {
    display: block;
    height: 41px;
    background: #1b1e24;
}
.bar-wide { width: 15px; }
.bar-thin { width: 3px; background: #2b2e35; }
.bar-slim { width: 8px; }
.bar-grey { background: #45484d; }
.menu-tip {
    position: absolute;
    z-index: 3;
    left: 1691px;
    top: 1081px;
    width: 96px;
    height: 33px;
    display: flex;
    align-items: center;
    justify-content: center;
    background: #f2f2f2;
    box-shadow: 0 1px 3px rgba(0,0,0,.3);
    font-size: 20px;
    color: #111;
}
```
